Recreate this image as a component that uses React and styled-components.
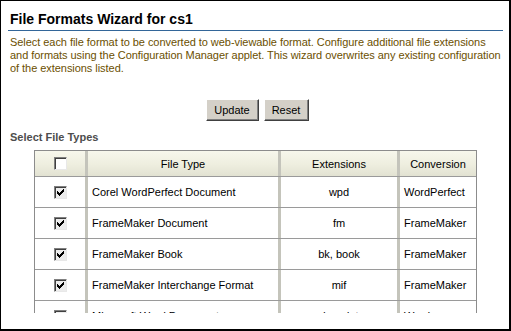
import React from "react";
import styled, { createGlobalStyle } from "styled-components";

const Global = createGlobalStyle`
  html, body { margin: 0; padding: 0; background: #fff; }
  * { box-sizing: border-box; }
`;

const Frame = styled.div`
  width: 511px;
  height: 331px;
  border: 1px solid #000;
  border-right-width: 2px;
  border-bottom-width: 2px;
  background: #fff;
  display: flex;
  flex-direction: column;
  font-family: "Liberation Sans", Arial, sans-serif;
`;

const Viewport = styled.div`
  height: 312px;
  flex-shrink: 0;
  overflow: hidden;
  padding: 0 6px 0 7px;
`;

const Title = styled.h1`
  margin: 0;
  padding: 11px 0 3px 2px;
  font-size: 14px;
  line-height: 15px;
  font-weight: bold;
  color: #000;
  border-bottom: 1px solid #336699;
`;

const Intro = styled.p`
  margin: 0;
  padding: 5px 0 0 2px;
  font-size: 11px;
  line-height: 13px;
  letter-spacing: -0.05px;
  white-space: nowrap;
  color: #6b4f00;
`;

const ButtonRow = styled.div`
  display: flex;
  justify-content: center;
  gap: 5px;
  margin-top: 24px;
  padding-left: 3px;
`;

const Button = styled.button`
  height: 22px;
  width: ${(p) => p.$w}px;
  padding: 0;
  font-family: "Liberation Sans", Arial, sans-serif;
  font-size: 11px;
  color: #000;
  background: #d4d0c8;
  border: 1px solid;
  border-color: #fff #404040 #404040 #fff;
  box-shadow: inset -1px -1px 0 #808080;
`;

const Section = styled.div`
  margin: 10px 0 0 2px;
  font-size: 11px;
  line-height: 13px;
  font-weight: bold;
  color: #4d4d4d;
`;

const Table = styled.div`
  margin: 6px 0 0 26px;
  width: 443px;
  border: 1px solid #8c8c8c;
  border-bottom: none;
`;

const Row = styled.div`
  display: grid;
  grid-template-columns: 50px 193px 119px 79px;
  height: ${(p) => (p.$head ? 26 : 31)}px;
  border-bottom: 1px solid #9a9a9a;
  background: ${(p) =>
    p.$head ? "linear-gradient(#f7f7ec, #eeeedf 55%, #e2e2d2)" : "#fff"};
`;

const Cell = styled.div`
  display: flex;
  align-items: center;
  justify-content: ${(p) => (p.$align === "left" ? "flex-start" : "center")};
  padding-left: ${(p) => (p.$align === "left" ? 4 : 0)}px;
  font-size: 11px;
  color: #000;
  white-space: nowrap;
  border-left: ${(p) => (p.$first ? "none" : "3px solid #c4c4bb")};
`;

const Box = styled.span`
  width: 13px;
  height: 13px;
  display: inline-flex;
  align-items: center;
  justify-content: center;
  border: 1px solid;
  border-color: #808080 #e8e8e8 #e8e8e8 #808080;
  background: ${(p) => (p.$checked ? "#ececec" : "#fff")};
  box-shadow: inset 1px 1px 0 #404040;
`;

const CheckBox = ({ checked }) => (
  <Box $checked={checked}>
    {checked && (
      <svg width="7" height="7" viewBox="0 0 7 7">
        <path d="M0 2h1v1h1v1h1V3h1V2h1V1h1V0h1v3H6v1H5v1H4v1H3v1H2V6H1V5H0z" fill="#000" />
      </svg>
    )}
  </Box>
);

const rows = [
  ["Corel WordPerfect Document", "wpd", "WordPerfect"],
  ["FrameMaker Document", "fm", "FrameMaker"],
  ["FrameMaker Book", "bk, book", "FrameMaker"],
  ["FrameMaker Interchange Format", "mif", "FrameMaker"],
  ["Microsoft Word Document", "doc, dot", "Word"],
];

export default function App() {
  return (
    <>
      <Global />
      <Frame>
        <Viewport>
          <Title>File Formats Wizard for cs1</Title>
          <Intro>
            Select each file format to be converted to web-viewable format. Configure additional file extensions
            <br />
            and formats using the Configuration Manager applet. This wizard overwrites any existing configuration
            <br />
            of the extensions listed.
          </Intro>
          <ButtonRow>
            <Button $w={53}>Update</Button>
            <Button $w={45}>Reset</Button>
          </ButtonRow>
          <Section>Select File Types</Section>
          <Table>
            <Row $head>
              <Cell $first>
                <CheckBox checked={false} />
              </Cell>
              <Cell>File Type</Cell>
              <Cell>Extensions</Cell>
              <Cell>Conversion</Cell>
            </Row>
            {rows.map(([type, ext, conv]) => (
              <Row key={type}>
                <Cell $first>
                  <CheckBox checked />
                </Cell>
                <Cell $align="left">{type}</Cell>
                <Cell>{ext}</Cell>
                <Cell $align="left">{conv}</Cell>
              </Row>
            ))}
          </Table>
        </Viewport>
      </Frame>
    </>
  );
}
